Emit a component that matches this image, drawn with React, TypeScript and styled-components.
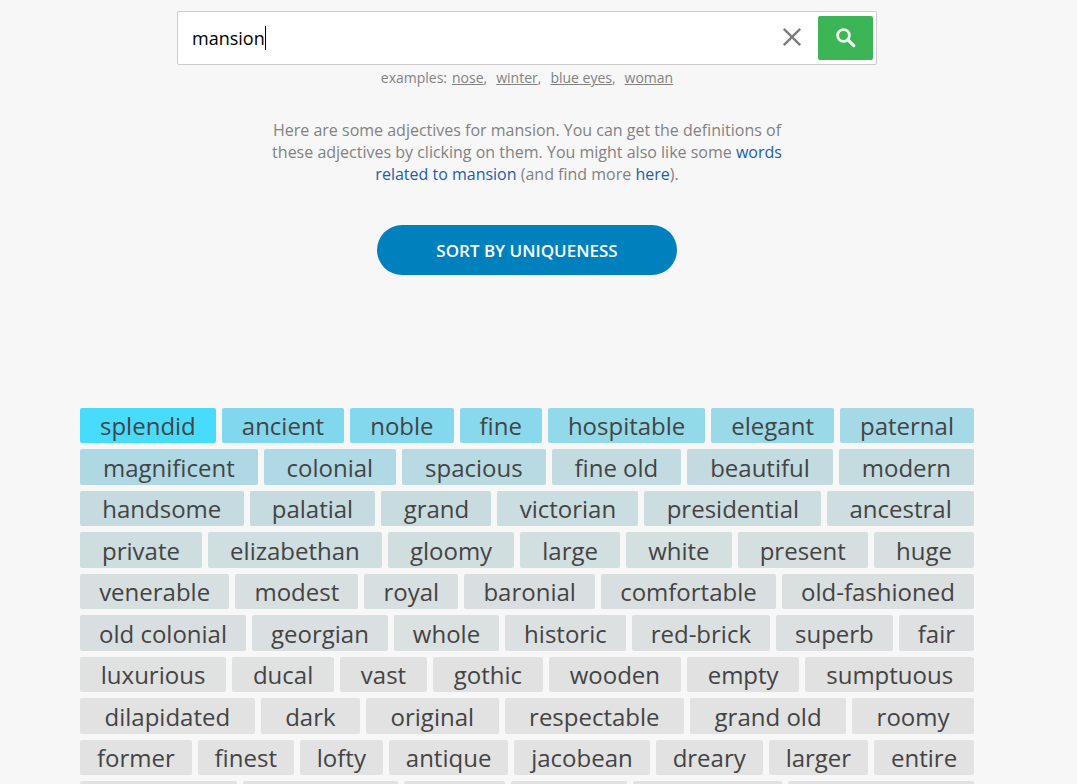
import React from 'react';
import styled, { createGlobalStyle } from 'styled-components';

const GlobalStyle = createGlobalStyle`
  * { box-sizing: border-box; }
  body {
    margin: 0;
    background: #f7f7f7;
    color: #828282;
    font-family: "Open Sans", "Noto Sans", sans-serif;
  }
`;

const Page = styled.main`
  height: 100vh;
  overflow: hidden;
  padding: 11px 23px 0 0;
  display: flex;
  flex-direction: column;
  align-items: center;
`;

const SearchForm = styled.form`
  display: flex;
  align-items: center;
  flex: none;
  width: 100%;
  max-width: 700px;
  height: 54px;
  padding: 0 3px 0 14px;
  background: #fff;
  border: 1px solid #ccc;
  border-radius: 2px;
`;

const SearchField = styled.label`
  display: flex;
  align-items: center;
  flex: 1;
  min-width: 0;
  height: 100%;
  cursor: text;
`;

const SearchInput = styled.input`
  field-sizing: content;
  min-width: 1px;
  max-width: 100%;
  height: 100%;
  padding: 0;
  border: 0;
  outline: 0;
  background: transparent;
  color: #000;
  caret-color: transparent;
  font-family: inherit;
  font-size: 18px;
`;

const Caret = styled.span`
  flex: none;
  width: 1px;
  height: 24px;
  background: #000;
`;

const ClearButton = styled.button`
  display: flex;
  padding: 0 0 2px;
  margin-right: 16px;
  border: 0;
  background: none;
  color: #7c7c7c;
  cursor: pointer;
`;

const SearchButton = styled.button`
  display: flex;
  align-items: center;
  justify-content: center;
  width: 55px;
  height: 44px;
  padding: 0;
  border: 0;
  border-radius: 2px;
  background: #3cb557;
  color: #effaf0;
  cursor: pointer;
`;

const Examples = styled.p`
  display: flex;
  gap: 9px;
  margin: 3px 0 0;
  font-size: 14px;
  line-height: 20px;

  a { color: inherit; }
`;

const ExamplesLabel = styled.span`
  margin-right: -4px;
`;

const Intro = styled.p`
  max-width: 520px;
  margin: 31px 0 0;
  font-size: 16px;
  line-height: 22px;
  text-align: center;

  a {
    color: #1a5dab;
    text-decoration: none;
  }
`;

const SortButton = styled.button`
  flex: none;
  width: 300px;
  height: 50px;
  margin-top: 40px;
  border: 0;
  border-radius: 25px;
  background: #0080bd;
  color: #fff;
  font-family: inherit;
  font-size: 17px;
  font-weight: 600;
  text-transform: uppercase;
  cursor: pointer;
`;

const Cloud = styled.section`
  display: flex;
  flex-direction: column;
  gap: 6px;
  width: 100%;
  margin-top: 133px;
  padding: 0 80px;
`;

const TagRow = styled.div`
  display: flex;
  flex: none;
  gap: 6px;
  height: 35px;
  line-height: 36px;

  &:nth-child(even) {
    height: 36px;
    line-height: 38px;
  }
`;

const Tag = styled.a<{ $tone: string; $grow?: number }>`
  flex: ${({ $grow }) => ($grow ? `${$grow} 1 0` : '1 0 auto')};
  border-radius: 2px;
  background: ${({ $tone }) => $tone};
  color: #444;
  font-size: 24px;
  text-align: center;
  text-decoration: none;
  white-space: nowrap;
`;

type Entry = [word: string, tone: string];

const rows: Entry[][] = [
  [['splendid', '#48dcfc'], ['ancient', '#81d8ee'], ['noble', '#84d8ee'], ['fine', '#8ad8ec'], ['hospitable', '#92d9e9'], ['elegant', '#99d9e8'], ['paternal', '#a6d9e6']],
  [['magnificent', '#aed9e4'], ['colonial', '#afd9e4'], ['spacious', '#b8dae2'], ['fine old', '#c2dbe0'], ['beautiful', '#c3dbe0'], ['modern', '#c4dbe0']],
  [['handsome', '#c5dbdf'], ['palatial', '#c6dbdf'], ['grand', '#c8dcdf'], ['victorian', '#cadde0'], ['presidential', '#ccdde0'], ['ancestral', '#cedde0']],
  [['private', '#cddde0'], ['elizabethan', '#cfdee0'], ['gloomy', '#d0dee0'], ['large', '#d2dfe0'], ['white', '#d4dfe0'], ['present', '#d6dfe0'], ['huge', '#d7dfe0']],
  [['venerable', '#d7dfe0'], ['modest', '#d8dfe0'], ['royal', '#d8dfe0'], ['baronial', '#d9dfe0'], ['comfortable', '#d9dfe0'], ['old-fashioned', '#dadfe0']],
  [['old colonial', '#d9dfe1'], ['georgian', '#dae0e1'], ['whole', '#dbe0e1'], ['historic', '#dce0e1'], ['red-brick', '#dde0e1'], ['superb', '#dde0e1'], ['fair', '#dee0e1']],
  [['luxurious', '#e0e1e1'], ['ducal', '#e0e1e1'], ['vast', '#e1e1e1'], ['gothic', '#e1e1e1'], ['wooden', '#e1e1e1'], ['empty', '#e1e1e1'], ['sumptuous', '#e1e1e1']],
  [['dilapidated', '#e2e2e2'], ['dark', '#e2e2e2'], ['original', '#e2e2e2'], ['respectable', '#e2e2e2'], ['grand old', '#e2e2e2'], ['roomy', '#e2e2e2']],
  [['former', '#e2e2e2'], ['finest', '#e2e2e2'], ['lofty', '#e2e2e2'], ['antique', '#e2e2e2'], ['jacobean', '#e2e2e2'], ['dreary', '#e2e2e2'], ['larger', '#e2e2e2'], ['entire', '#e2e2e2']],
];

const pendingWidths = [157, 155, 101, 115, 149, 186];

const examples = ['nose', 'winter', 'blue eyes', 'woman'];

export default function App() {
  return (
    <>
      <GlobalStyle />
      <Page>
        <SearchForm onSubmit={(event) => event.preventDefault()}>
          <SearchField>
            <SearchInput aria-label="Search for a noun" defaultValue="mansion" />
            <Caret aria-hidden />
          </SearchField>
          <ClearButton type="reset" aria-label="Clear">
            <svg width="20" height="20" viewBox="0 0 20 20" fill="none" stroke="currentColor" strokeWidth="2.4">
              <path d="M1.8 1.8 18.2 18.2M18.2 1.8 1.8 18.2" />
            </svg>
          </ClearButton>
          <SearchButton type="submit" aria-label="Search">
            <svg width="20" height="20" viewBox="0 0 20 20" fill="none" stroke="currentColor" strokeLinecap="round">
              <circle cx="7.5" cy="7.5" r="5.9" strokeWidth="2.8" />
              <path d="M12.2 12.2 17.8 17.6" strokeWidth="3.2" />
            </svg>
          </SearchButton>
        </SearchForm>
        <Examples>
          <ExamplesLabel>examples:</ExamplesLabel>
          {examples.map((word, index) => (
            <span key={word}>
              <a href={`#${word}`}>{word}</a>
              {index < examples.length - 1 && ','}
            </span>
          ))}
        </Examples>
        <Intro>
          Here are some adjectives for mansion. You can get the definitions of these adjectives by
          clicking on them. You might also like some <a href="#related">words related to mansion</a>{' '}
          (and find more <a href="#more">here</a>).
        </Intro>
        <SortButton type="button">Sort by uniqueness</SortButton>
        <Cloud aria-label="Adjectives">
          {rows.map((row) => (
            <TagRow key={row[0][0]}>
              {row.map(([word, tone]) => (
                <Tag key={word} href={`#${word}`} $tone={tone}>{word}</Tag>
              ))}
            </TagRow>
          ))}
          <TagRow aria-hidden>
            {pendingWidths.map((width, index) => (
              <Tag as="span" key={index} $tone="#e2e2e2" $grow={width} />
            ))}
          </TagRow>
        </Cloud>
      </Page>
    </>
  );
}
